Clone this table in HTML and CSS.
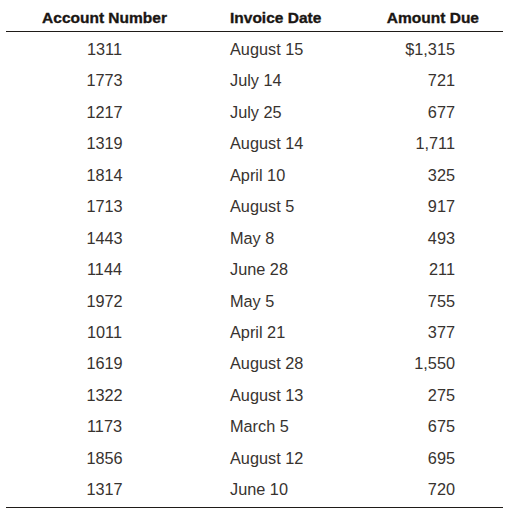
FILE: index.html
```html
<!DOCTYPE html>
<html lang="en">
<head>
<meta charset="utf-8">
<title>Invoices</title>
<link rel="stylesheet" href="styles.css">
</head>
<body>
<table class="invoices">
  <colgroup>
    <col class="c-acct">
    <col class="c-date">
    <col class="c-amt">
  </colgroup>
  <thead>
    <tr>
      <th class="acct">Account Number</th>
      <th class="date">Invoice Date</th>
      <th class="amt">Amount Due</th>
    </tr>
  </thead>
  <tbody>
    <tr><td class="acct">1311</td><td class="date">August 15</td><td class="amt">$1,315</td></tr>
    <tr><td class="acct">1773</td><td class="date">July 14</td><td class="amt">721</td></tr>
    <tr><td class="acct">1217</td><td class="date">July 25</td><td class="amt">677</td></tr>
    <tr><td class="acct">1319</td><td class="date">August 14</td><td class="amt">1,711</td></tr>
    <tr><td class="acct">1814</td><td class="date">April 10</td><td class="amt">325</td></tr>
    <tr><td class="acct">1713</td><td class="date">August 5</td><td class="amt">917</td></tr>
    <tr><td class="acct">1443</td><td class="date">May 8</td><td class="amt">493</td></tr>
    <tr><td class="acct">1144</td><td class="date">June 28</td><td class="amt">211</td></tr>
    <tr><td class="acct">1972</td><td class="date">May 5</td><td class="amt">755</td></tr>
    <tr><td class="acct">1011</td><td class="date">April 21</td><td class="amt">377</td></tr>
    <tr><td class="acct">1619</td><td class="date">August 28</td><td class="amt">1,550</td></tr>
    <tr><td class="acct">1322</td><td class="date">August 13</td><td class="amt">275</td></tr>
    <tr><td class="acct">1173</td><td class="date">March 5</td><td class="amt">675</td></tr>
    <tr><td class="acct">1856</td><td class="date">August 12</td><td class="amt">695</td></tr>
    <tr><td class="acct">1317</td><td class="date">June 10</td><td class="amt">720</td></tr>
  </tbody>
</table>
</body>
</html>
```

FILE: styles.css
```css
html, body {
  margin: 0;
  padding: 0;
  background: #ffffff;
}

body {
  font-family: "Liberation Sans", Arial, sans-serif;
  color: #38332f;
}

.invoices {
  margin: 0 0 0 6px;
  width: 497px;
  border-collapse: collapse;
  table-layout: fixed;
  border-bottom: 1px solid #1f1b18;
}

.c-acct { width: 197px; }
.c-date { width: 150px; }
.c-amt { width: 150px; }

.invoices th {
  font-size: 15.5px;
  font-weight: 700;
  color: #1a1613;
  -webkit-text-stroke: 0.35px #1a1613;
  padding: 5px 0 0 0;
  height: 26px;
  line-height: 26px;
  border-bottom: 1px solid #1f1b18;
  box-sizing: content-box;
}

.invoices td {
  font-size: 16.3px;
  font-weight: 400;
  padding: 4px 0 0 0;
  height: 27.43px;
  line-height: 27.43px;
}

.invoices tbody tr:last-child td {
  padding-bottom: 3px;
}

.invoices .acct { text-align: center; }
.invoices .date { text-align: left; padding-left: 27px; }
.invoices th.amt { text-align: right; padding-right: 24px; }
.invoices td.amt { text-align: right; padding-right: 48px; }
```
